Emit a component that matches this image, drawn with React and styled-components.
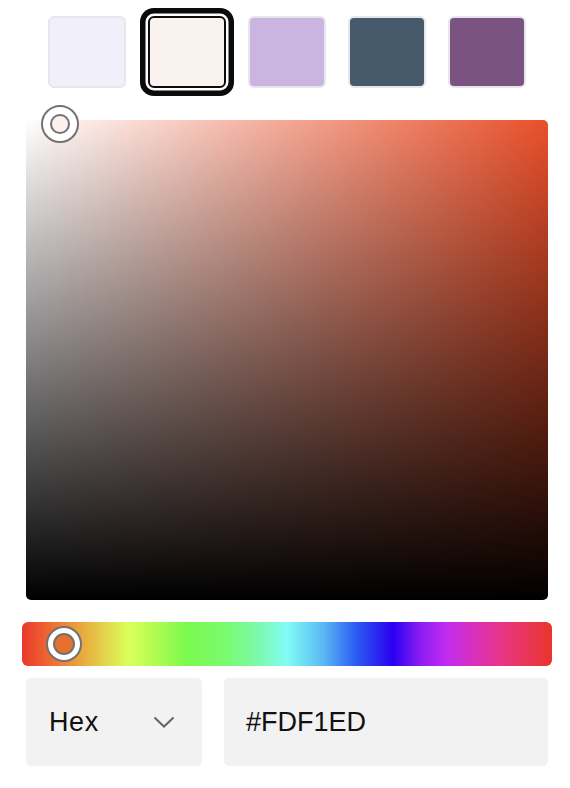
import React from "react";
import styled, { createGlobalStyle, css } from "styled-components";

const Global = createGlobalStyle`
  html, body { margin: 0; padding: 0; background: #ffffff; }
  body { font-family: "Liberation Sans", Arial, Helvetica, sans-serif; color: #111; }
  * { box-sizing: border-box; }
`;

const Panel = styled.div`
  width: 570px;
  padding: 16px 22px 0 26px;
  display: flex;
  flex-direction: column;
`;

const SwatchRow = styled.div`
  display: flex;
  justify-content: center;
  gap: 22px;
`;

const Swatch = styled.button`
  width: 78px;
  height: 72px;
  padding: 0;
  border-radius: 6px;
  border: 2px solid #e7e6ec;
  background: ${(p) => p.$color};
  cursor: pointer;
  ${(p) =>
    p.$selected &&
    css`
      border-color: #0d0d0d;
      box-shadow: 0 0 0 2.5px #ffffff, 0 0 0 8px #0b0b0b;
    `}
`;

const Saturation = styled.div`
  position: relative;
  margin-top: 32px;
  height: 480px;
  border-radius: 5px;
  background:
    linear-gradient(to bottom, rgba(0, 0, 0, 0), #000000),
    linear-gradient(to right, #ffffff, rgba(255, 255, 255, 0)),
    ${(p) => p.$hue};
`;

const Thumb = styled.div`
  position: absolute;
  width: ${(p) => p.$size}px;
  height: ${(p) => p.$size}px;
  margin-left: ${(p) => -p.$size / 2}px;
  margin-top: ${(p) => -p.$size / 2}px;
  border-radius: 50%;
  border: 2px solid #727272;
  background: #ffffff;
  display: flex;
  align-items: center;
  justify-content: center;
`;

const ThumbCore = styled.div`
  width: ${(p) => p.$size}px;
  height: ${(p) => p.$size}px;
  border-radius: 50%;
  border: 2px solid #727272;
  background: ${(p) => p.$fill};
`;

const HueTrack = styled.div`
  position: relative;
  margin: 22px -4px 0 -4px;
  height: 44px;
  border-radius: 6px;
  background: linear-gradient(
    to right,
    #e9392b 0%,
    #ee7a35 7%,
    #e8b040 12%,
    #dcff5a 20%,
    #b2fc52 25%,
    #7cf94f 31%,
    #7afa6c 38%,
    #7cf9a4 44%,
    #80fcf6 50%,
    #5ab6f3 57%,
    #2a5cf2 63%,
    #2a1af0 68%,
    #2a00f2 70%,
    #8a1cf2 75%,
    #c12cf1 80%,
    #d72fc0 85%,
    #e8368a 90%,
    #e9355a 95%,
    #e9352b 100%
  );
`;

const FieldRow = styled.div`
  display: grid;
  grid-template-columns: 176px 1fr;
  gap: 22px;
  margin-top: 12px;
`;

const Field = styled.div`
  height: 88px;
  border-radius: 5px;
  background: #f2f2f2;
  display: flex;
  align-items: center;
  justify-content: space-between;
  padding: 0 28px 0 ${(p) => p.$padLeft}px;
  font-size: 27px;
  color: #111111;
  letter-spacing: ${(p) => p.$spacing || 0}px;
`;

const Chevron = () => (
  <svg width="22" height="14" viewBox="0 0 22 14" fill="none">
    <path d="M2.5 2.5 L12 11.5 L21.5 2.5" stroke="#666666" strokeWidth="2" />
  </svg>
);

const swatches = [
  { color: "#f1effa" },
  { color: "#faf2ee", selected: true },
  { color: "#c9b5df" },
  { color: "#475a6b" },
  { color: "#7a5382" },
];

export default function App() {
  return (
    <>
      <Global />
      <Panel>
        <SwatchRow>
          {swatches.map((s, i) => (
            <Swatch key={i} $color={s.color} $selected={s.selected} />
          ))}
        </SwatchRow>
        <Saturation $hue="#e9502b">
          <Thumb $size={38} style={{ left: 33.5, top: 3.5 }}>
            <ThumbCore $size={20} $fill="#fdf1ed" />
          </Thumb>
        </Saturation>
        <HueTrack>
          <Thumb $size={36} style={{ left: 42, top: 22 }}>
            <ThumbCore $size={22} $fill="#e8702f" />
          </Thumb>
        </HueTrack>
        <FieldRow>
          <Field $padLeft={23} $spacing={0.6}>
            <span>Hex</span>
            <Chevron />
          </Field>
          <Field $padLeft={22}>
            <span>#FDF1ED</span>
          </Field>
        </FieldRow>
      </Panel>
    </>
  );
}
